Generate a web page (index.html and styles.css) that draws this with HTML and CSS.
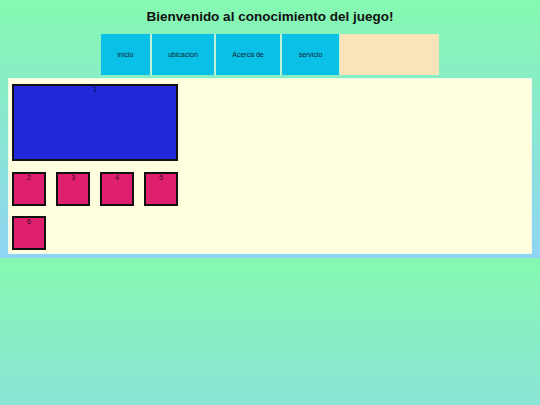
FILE: index.html
```html
<!DOCTYPE html>
<html lang="es">
<head>
<meta charset="utf-8">
<title>Bienvenido</title>
<link rel="stylesheet" href="styles.css">
</head>
<body>
<div class="page">
  <h1 class="title">Bienvenido al conocimiento del juego!</h1>
  <nav class="nav">
    <a class="nav-item w-inicio">inicio</a>
    <a class="nav-item w-ubic">ubicacion</a>
    <a class="nav-item w-acerca">Acerca de</a>
    <a class="nav-item w-serv last">servicio</a>
    <div class="nav-fill"></div>
  </nav>
  <main class="main">
    <div class="big">1</div>
    <div class="grid">
      <div class="box">2</div>
      <div class="box">3</div>
      <div class="box">4</div>
      <div class="box">5</div>
      <div class="box">6</div>
    </div>
  </main>
</div>
</body>
</html>
```

FILE: styles.css
```css
html {
  background: linear-gradient(to bottom, #85f9b0 0%, #8fd4f3 100%) 0 0 / 100% 258px repeat;
  min-height: 100%;
}
body {
  margin: 0;
  font-family: "Liberation Sans", Arial, sans-serif;
  color: #111;
}
.page {
  padding: 9px 8px 0;
}
.title {
  margin: 0;
  font-size: 13.5px;
  line-height: 16px;
  font-weight: bold;
  text-align: center;
  color: #111;
}
.nav {
  margin-top: 9px;
  display: flex;
  justify-content: center;
  height: 41px;
}
.nav-item {
  display: flex;
  align-items: center;
  justify-content: center;
  background: #0bc0e7;
  border-right: 2px solid #bff3d2;
  font-size: 7px;
  color: #0d2030;
}
.nav-item.last { border-right-width: 1px; }
.w-inicio { width: 49px; }
.w-ubic { width: 62px; }
.w-acerca { width: 64px; }
.w-serv { width: 57px; }
.nav-fill {
  width: 99px;
  background: #f8e4b8;
}
.main {
  margin-top: 3px;
  background: #ffffe0;
  border: 1px solid #eefbea;
  padding: 5px 3px 3px;
}
.big {
  box-sizing: border-box;
  width: 166px;
  height: 77px;
  background: #2128d9;
  border: 2px solid #111;
  text-align: center;
  font-size: 7.5px;
  line-height: 8px;
  color: #0a0a40;
}
.grid {
  margin-top: 11px;
  width: 166px;
  display: grid;
  grid-template-columns: repeat(4, 34px);
  justify-content: space-between;
  row-gap: 10px;
}
.box {
  box-sizing: border-box;
  width: 34px;
  height: 34px;
  background: #e01f6e;
  border: 2px solid #111;
  text-align: center;
  font-size: 7.5px;
  line-height: 8px;
  color: #3a0a25;
}
```
